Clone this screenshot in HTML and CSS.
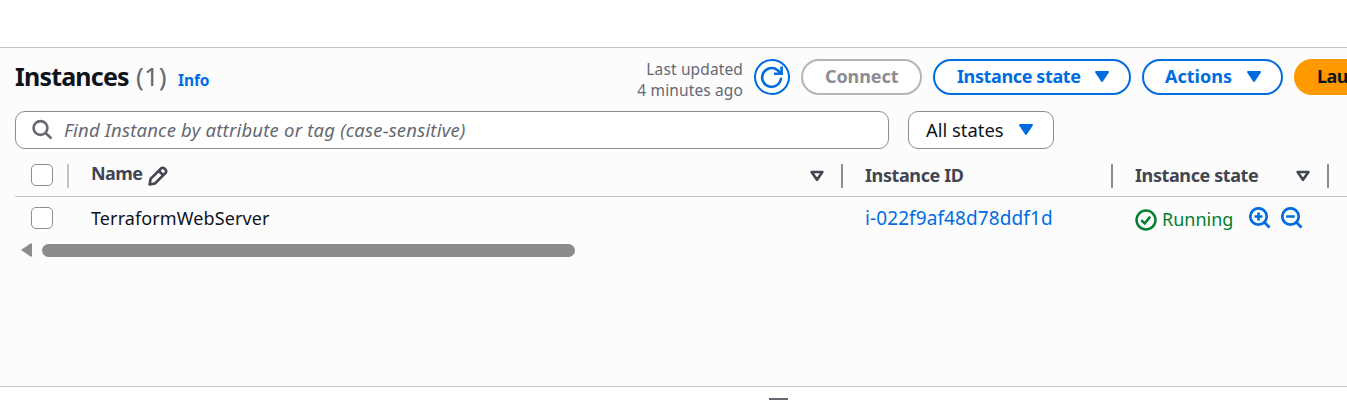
FILE: index.html
```
<!DOCTYPE html>
<html lang="en">
<head>
<meta charset="utf-8">
<title>Instances</title>
<link rel="stylesheet" href="styles.css">
</head>
<body>
<main class="panel">
  <header class="header">
    <h1 class="title">Instances</h1>
    <span class="count">(1)</span>
    <a class="info">Info</a>
    <div class="updated"><span>Last updated</span><br><span>4 minutes ago</span></div>
    <button class="btn refresh" aria-label="Refresh">
      <svg width="24" height="24" viewBox="0 0 24 24" fill="none" stroke="#006ce0" stroke-width="2.6"><path d="M21 12.8A9.4 9.4 0 1 1 17.6 5.2L21 8.3"/><path d="M21.6 1.5V8.8H14"/></svg>
    </button>
    <button class="btn connect"><span>Connect</span></button>
    <button class="btn state"><span>Instance state</span><svg width="16" height="12" viewBox="0 0 16 12"><path class="caret" d="M2 1H14L8 10Z"/></svg></button>
    <button class="btn actions"><span>Actions</span><svg width="16" height="12" viewBox="0 0 16 12"><path class="caret" d="M2 1H14L8 10Z"/></svg></button>
    <button class="btn launch"><span>Lau</span></button>
  </header>
  <div class="filters">
    <div class="search">
      <svg width="22" height="22" viewBox="0 0 22 22" fill="none" stroke="#656871" stroke-width="2.6"><circle cx="8.5" cy="9" r="6.9"/><path d="M13.3 13.8L19.5 19.5"/></svg>
      <span>Find Instance by attribute or tag (case-sensitive)</span>
    </div>
    <div class="select"><span>All states</span><svg width="16" height="12" viewBox="0 0 16 12"><path class="caret" d="M2 1H14L8 10Z"/></svg></div>
  </div>
  <div class="row head">
    <div class="check"><i class="box"></i><i class="rule light"></i></div>
    <div class="cell name"><span class="label-name">Name</span>
      <svg class="pencil" width="20" height="20" viewBox="0 0 20 20" fill="none" stroke="#424650" stroke-width="2.6" stroke-linejoin="round"><path d="M1.6 18.5L2.6 12.9L13 2.5C14 1.5 15.4 1.5 16.4 2.5L17.5 3.6C18.5 4.6 18.5 6 17.5 7L7.1 17.4Z"/><path d="M11 5L15.3 9.3"/></svg>
      <svg class="sort" width="16" height="12" viewBox="0 0 16 12"><path d="M2.6 2H13.4L8 9.8Z"/></svg><i class="rule"></i></div>
    <div class="cell id"><span class="label-id">Instance ID</span><i class="rule"></i></div>
    <div class="cell status"><span class="label-state">Instance state</span><svg class="sort" width="16" height="12" viewBox="0 0 16 12"><path d="M2.6 2H13.4L8 9.8Z"/></svg><i class="rule"></i></div>
  </div>
  <div class="row body">
    <div class="check"><i class="box"></i></div>
    <div class="cell name"><span class="server">TerraformWebServer</span></div>
    <div class="cell id"><a class="link">i-022f9af48d78ddf1d</a></div>
    <div class="cell status">
      <svg class="ok" width="22" height="22" viewBox="0 0 22 22" fill="none" stroke="#00802f" stroke-width="2.5"><circle cx="11" cy="11" r="9.5"/><path d="M6.2 11.2L9.7 14.5L15.2 7.6"/></svg>
      <span class="running">Running</span>
      <svg class="zoom-in" width="22" height="22" viewBox="0 0 22 22" fill="none" stroke="#006ce0" stroke-width="2.7"><circle cx="9.5" cy="9.5" r="8.2"/><path d="M15.3 15.3L20.5 20.5M5.5 9.5H13.5M9.5 5.5V13.5"/></svg>
      <svg class="zoom-out" width="22" height="22" viewBox="0 0 22 22" fill="none" stroke="#006ce0" stroke-width="2.7"><circle cx="9.5" cy="9.5" r="8.2"/><path d="M15.3 15.3L20.5 20.5M5.2 9.5H13.8"/></svg>
    </div>
  </div>
  <div class="scroll"><svg width="11" height="14" viewBox="0 0 11 14"><path d="M0 7L9.5 .5Q11 0 11 1V13Q11 14 9.5 13.5Z" fill="#8b8b8b"/></svg><i class="thumb"></i></div>
</main>
<div class="drawer"><i class="handle"></i></div>
</body>
</html>
```
FILE: styles.css
```
* { box-sizing: border-box; }
body { margin: 0; height: 400px; overflow: hidden; background: #fff; padding-top: 47px; font: 18px/24px "Noto Sans", "Open Sans", sans-serif; color: #0f141a; }
.panel { height: 340px; background: #fcfcfd; border-top: 1px solid #c2c3c8; border-bottom: 1px solid #c2c3c8; overflow: hidden; }
span, a, h1 { white-space: nowrap; }
svg { flex: none; display: block; }
.header { display: flex; height: 63px; width: 1500px; padding: 11px 0 0 15px; }
.title { margin: 0; width: 121px; font-size: 25px; line-height: 34px; font-weight: 700; letter-spacing: -.8px; }
.count { width: 42px; font-size: 26px; line-height: 34px; color: #656871; letter-spacing: .1px; }
.info { width: 60px; font-size: 15.5px; line-height: 42px; font-weight: 700; color: #006ce0; letter-spacing: -.1px; }
.updated { width: 505px; text-align: right; font-size: 15.5px; line-height: 21px; color: #656871; letter-spacing: .13px; }
.btn { display: flex; align-items: center; flex: none; height: 36px; margin: 0 0 0 11px; border: 2px solid #006ce0; border-radius: 18px; padding: 0 0 0 22px; background: #fff; font: 700 18px/32px "Noto Sans", "Open Sans", sans-serif; color: #006ce0; }
.btn span { height: 34px; }
.btn svg { margin-left: auto; }
.caret { fill: #006ce0; stroke: #006ce0; stroke-width: 2; stroke-linejoin: round; }
.refresh { width: 36px; padding: 0; justify-content: center; }
.btn.refresh svg { margin: 0; }
.connect { width: 121px; border-color: #b4b4bb; color: #8c8c94; letter-spacing: -.1px; }
.state { width: 198px; padding-right: 19px; letter-spacing: -.38px; }
.actions { width: 141px; padding: 0 19px 0 21px; }
.launch { width: 190px; padding-left: 21px; border-color: #ff9900; background: #ff9900; color: #0f141a; letter-spacing: -.6px; }
.filters { display: flex; gap: 19px; height: 50px; padding-left: 15px; }
.search { display: flex; align-items: center; width: 874px; height: 38px; border: 1px solid #8c8c94; border-radius: 10px; background: #fff; padding-left: 16px; font-size: 18.5px; font-style: italic; color: #656871; letter-spacing: .2px; }
.search span { margin-left: 10px; }
.select { display: flex; align-items: center; width: 146px; height: 38px; border: 1px solid #8c8c94; border-radius: 10px; background: #fff; padding: 0 19px 0 17px; font-size: 18.4px; }
.select svg { margin-left: auto; }
.row { display: flex; width: 1400px; margin-left: 15px; }
.head { height: 36px; border-bottom: 1px solid #c2c3c8; font-weight: 700; color: #424650; letter-spacing: -.4px; }
.body { height: 43px; }
.check { display: flex; width: 54px; padding: 3px 0 0 16px; }
.body .check { padding-top: 10px; }
.box { width: 22px; height: 22px; border: 1.5px solid #8c8c94; border-radius: 5px; background: #fff; }
.rule { flex: none; width: 2px; height: 24px; margin: 3px 0 0 auto; background: #8c8c94; }
.light { background: #c2c3c8; margin: 0 0 0 14px; }
.cell { display: flex; flex: none; padding-left: 22px; }
.name { width: 774px; }
.id { width: 270px; }
.status { width: 216px; }
.label-name { width: 57px; line-height: 24px; letter-spacing: -.6px; }
.label-id, .label-state { line-height: 28px; }
.pencil { margin-top: 5px; }
.sort { margin: 9px 16px 0 auto; fill: none; stroke: #424650; stroke-width: 2.6; stroke-linejoin: round; }
.sort + .rule { margin-left: 0; }
.server, .link { line-height: 43px; }
.server { letter-spacing: .1px; }
.link { color: #006ce0; font-size: 19px; letter-spacing: .1px; }
.ok { margin-top: 12px; }
.running { width: 92px; padding-left: 5px; line-height: 45px; color: #00802f; }
.zoom-in { margin-top: 10px; }
.zoom-out { margin: 10px 0 0 10px; }
.scroll { display: flex; align-items: center; height: 20px; padding-left: 21px; }
.thumb { width: 533px; height: 13px; margin-left: 10px; border-radius: 7px; background: #8b8b8b; }
.drawer { height: 13px; padding: 11px 0 0 769px; }
.handle { display: block; width: 19px; height: 2px; background: #656871; }
```
